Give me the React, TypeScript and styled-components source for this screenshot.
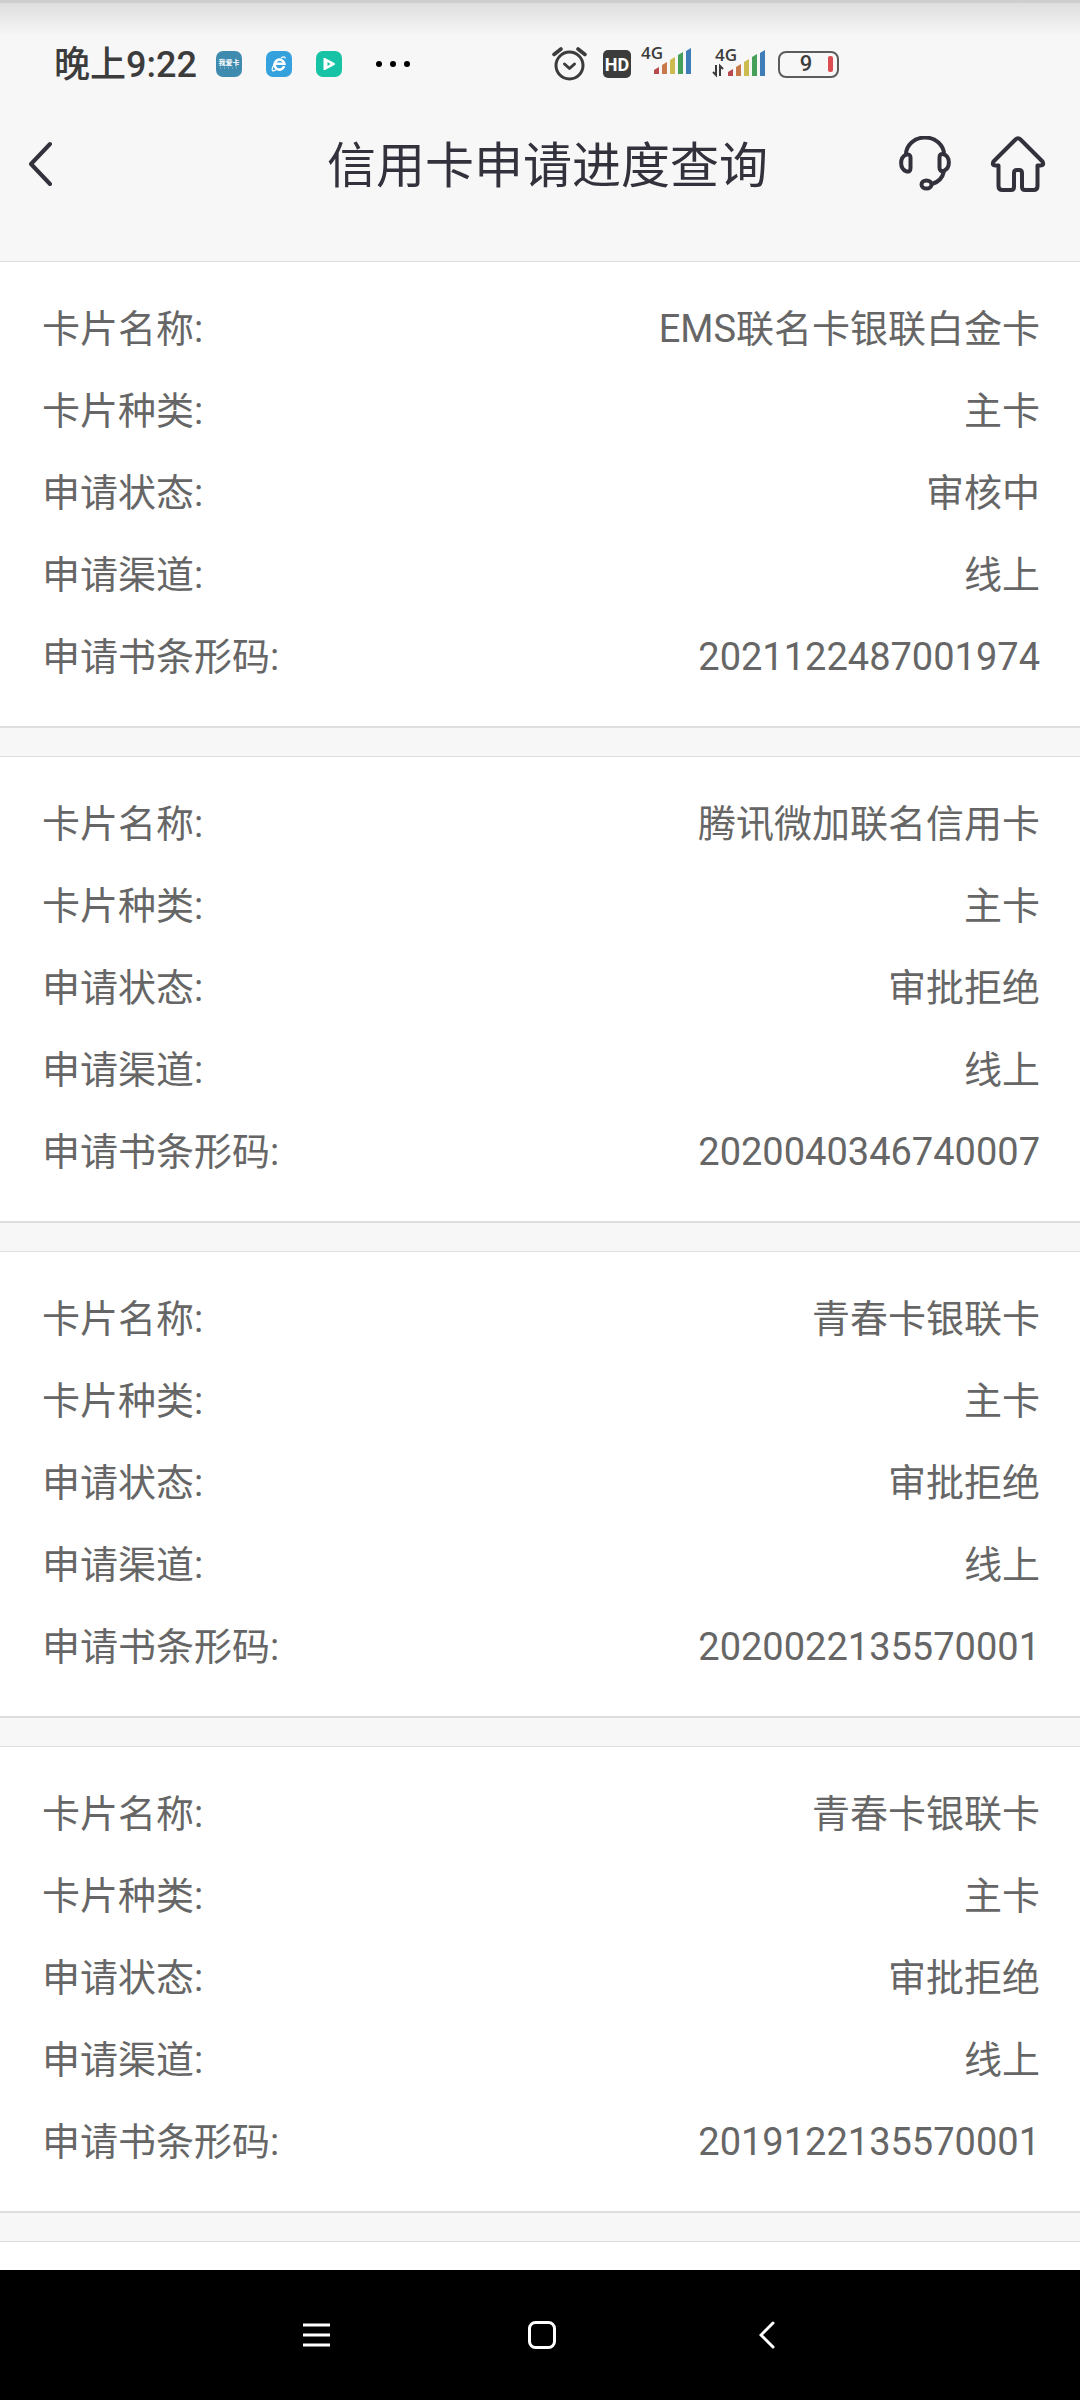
import React from "react";
import styled, { createGlobalStyle } from "styled-components";

const GlobalStyle = createGlobalStyle`
  *, *::before, *::after { box-sizing: border-box; }
  body {
    margin: 0;
    background: #f7f7f7;
    font-family: Roboto, "Noto Sans CJK SC", sans-serif;
  }
`;

const Screen = styled.div`
  display: flex;
  flex-direction: column;
  min-height: 100vh;
`;

const StatusBar = styled.div`
  display: flex;
  align-items: center;
  justify-content: space-between;
  height: 128px;
  padding: 0 241px 0 54px;
  color: #3c3c3c;
  background: linear-gradient(#cecece 0 3px, #dedede 3px, #f7f7f7 36px);
`;

const StatusGroup = styled.div<{ $gap: number }>`
  display: flex;
  align-items: center;
  gap: ${(p) => p.$gap}px;
`;

const Clock = styled.time`
  width: 138px;
  padding-top: 2px;
  font-size: 36px;
  line-height: 40px;
  font-weight: 500;
  white-space: nowrap;
`;

const HdBadge = styled.span`
  width: 28px;
  height: 28px;
  border-radius: 5px;
  background: #3c3c3c;
  color: #fff;
  font-size: 18px;
  line-height: 30px;
  font-weight: 700;
  text-align: center;
`;

const Battery = styled.div`
  display: flex;
  align-items: center;
  width: 61px;
  height: 27px;
  padding: 0 4px;
  border: 2px solid #5c5c5c;
  border-radius: 8px;
`;

const BatteryLevel = styled.span`
  flex: 1;
  font-size: 22px;
  line-height: 24px;
  font-weight: 500;
  text-align: center;
`;

const BatteryFill = styled.span`
  width: 5px;
  height: 16px;
  border-radius: 2px;
  background: #dc4c50;
`;

const Header = styled.header`
  display: flex;
  align-items: center;
  height: 133px;
  padding: 0 34px 62px 28px;
  color: #33313b;
`;

const Title = styled.h1`
  flex: 1;
  margin: 0;
  padding-top: 6px;
  font-size: 49px;
  line-height: 72px;
  font-weight: 400;
  text-align: center;
`;

const IconButton = styled.button<{ $width: number }>`
  display: flex;
  align-items: center;
  width: ${(p) => p.$width}px;
  height: 56px;
  padding: 0;
  border: 0;
  background: none;
  color: inherit;
`;

const Actions = styled.div`
  display: flex;
  gap: 37px;
`;

const List = styled.main`
  flex: 1;
  display: flex;
  flex-direction: column;
  gap: 28px;
`;

const Card = styled.dl`
  margin: 0;
  padding: 26px 40px 28px 42px;
  border-top: 1px solid #dedede;
  border-bottom: 2px solid #dedede;
  background: #fff;
`;

const NextCard = styled.div`
  flex: 1;
  border-top: 1px solid #dedede;
  background: #fff;
`;

const Row = styled.div`
  display: flex;
  justify-content: space-between;
  color: #666;
  font-size: 38px;
  line-height: 82px;
`;

const Label = styled.dt``;

const Value = styled.dd`
  margin: 0;
  text-align: right;
`;

const NavBar = styled.nav`
  display: flex;
  align-items: center;
  justify-content: center;
  gap: 168px;
  height: 130px;
  padding-left: 3px;
  background: #000;
  color: #fff;
`;

const NavButton = styled.button`
  display: flex;
  align-items: center;
  justify-content: center;
  width: 57px;
  height: 57px;
  padding: 0;
  border: 0;
  background: none;
  color: inherit;
`;

const CardForumIcon = () => (
  <svg width="26" height="26" viewBox="0 0 26 26" aria-hidden="true">
    <rect width="26" height="26" rx="7" fill="#3f8bb0" />
    <text x="13" y="14" fontSize="7" fontWeight="700" fill="#fff" textAnchor="middle">
      我爱卡
    </text>
    <path d="M4 17h18" stroke="#a9cde0" strokeDasharray="1 3" />
  </svg>
);

const BrowserIcon = () => (
  <svg width="26" height="26" viewBox="0 0 26 26" aria-hidden="true">
    <rect width="26" height="26" rx="7" fill="#36a2dd" />
    <path d="M18.2 15.2A5 5 0 1 1 18.4 12.8H9.5" fill="none" stroke="#fff" strokeWidth="2.6" />
    <path
      d="M8.2 13.5C5.6 17 5.4 20.2 7.8 19.8c1-.2 2-.8 3-1.5M15 7c2.6-1.6 4.4-1.5 4.3.5"
      fill="none"
      stroke="#fff"
      strokeWidth="1.2"
    />
  </svg>
);

const PlayIcon = () => (
  <svg width="26" height="26" viewBox="0 0 26 26" aria-hidden="true">
    <rect width="26" height="26" rx="7" fill="#16c3a4" />
    <path d="M8.500 7.800v10.400l9.500-5.200z" fill="#fff" stroke="#fff" strokeWidth="2" strokeLinejoin="round" />
    <path d="M11.500 11v4l3-2z" fill="#16c3a4" />
  </svg>
);

const MoreDots = () => (
  <svg width="44" height="6" viewBox="-10 0 44 6" fill="#000" aria-hidden="true">
    <circle cx="3" cy="3" r="3" />
    <circle cx="17" cy="3" r="3" />
    <circle cx="31" cy="3" r="3" />
  </svg>
);

const AlarmIcon = () => (
  <svg
    width="35"
    height="36"
    viewBox="0 0 35 36"
    fill="none"
    stroke="currentColor"
    strokeWidth="3"
    strokeLinecap="round"
    strokeLinejoin="round"
    aria-hidden="true"
  >
    <circle cx="17.500" cy="19.500" r="13.500" />
    <path d="M12.500 18l5 4.500 5-4.500" />
    <path d="M2 8.500l7-5.500M33 8.500l-7-5.500" strokeWidth="3.600" />
  </svg>
);

const BARS: [string, number][] = [
  ["#b8494e", 7],
  ["#c8794a", 12],
  ["#ccbc50", 17],
  ["#45a05a", 22],
  ["#3f7db8", 26],
];

const SignalBars = ({ x, bottom }: { x: number; bottom: number }) => (
  <>
    {BARS.map(([fill, h], i) => (
      <path key={fill} d={`M${x + i * 8} ${bottom}v${3 - h}l5-3v${h}z`} fill={fill} />
    ))}
  </>
);

const NetworkText = styled.text`
  font-family: "Open Sans", sans-serif;
  font-size: 17px;
  font-weight: 600;
  fill: #3c3c3c;
`;

const SignalIcon = () => (
  <svg width="51" height="48" viewBox="0 0 51 48" aria-hidden="true">
    <NetworkText x="0" y="19">4G</NetworkText>
    <SignalBars x={13} bottom={34} />
  </svg>
);

const DataSignalIcon = () => (
  <svg width="56" height="48" viewBox="0 0 56 48" aria-hidden="true">
    <NetworkText x="3" y="21">4G</NetworkText>
    <path d="M4 25v10l-3-3M8 36V26l3 3" fill="none" stroke="#3c3c3c" strokeWidth="2" />
    <SignalBars x={16} bottom={36} />
  </svg>
);

const HeaderBackIcon = () => (
  <svg
    width="24"
    height="46"
    viewBox="0 0 24 46"
    fill="none"
    stroke="currentColor"
    strokeWidth="4"
    strokeLinecap="round"
    strokeLinejoin="round"
    aria-hidden="true"
  >
    <path d="M22 3L3 23l19 20" />
  </svg>
);

const HeadsetIcon = () => (
  <svg
    width="56"
    height="56"
    viewBox="0 0 56 56"
    fill="none"
    stroke="currentColor"
    strokeWidth="4"
    strokeLinecap="round"
    strokeLinejoin="round"
    aria-hidden="true"
  >
    <path d="M9 18.500a19 17 0 0 1 38 0" />
    <path d="M13.500 21.500v10.500q0 4-4 3.500a8 9 0 0 1 0-17q4-.5 4 3z" />
    <path d="M42.500 21.500v10q0 4 4 3.500a8 9 0 0 0 0-17q-4-.5-4 3.500z" />
    <path d="M47 35q-2 10-12 13" />
    <ellipse cx="29.500" cy="48.500" rx="5" ry="4" />
  </svg>
);

const HomeIcon = () => (
  <svg
    width="56"
    height="58"
    viewBox="0 0 56 58"
    fill="none"
    stroke="currentColor"
    strokeWidth="4"
    strokeLinecap="round"
    strokeLinejoin="round"
    aria-hidden="true"
  >
    <path d="M25.500 4.500q2.500-2.500 5 0l22 22q2 4-2 4h-3V51q0 4-4 4H35q-3 0-3-3V38q0-3-3-3h-2q-3 0-3 3v14q0 3-3 3h-8.500q-4 0-4-4V30.500h-3q-4 0-2-4z" />
  </svg>
);

interface Application {
  name: string;
  status: string;
  barcode: string;
}

const APPLICATIONS: Application[] = [
  { name: "EMS联名卡银联白金卡", status: "审核中", barcode: "2021122487001974" },
  { name: "腾讯微加联名信用卡", status: "审批拒绝", barcode: "2020040346740007" },
  { name: "青春卡银联卡", status: "审批拒绝", barcode: "2020022135570001" },
  { name: "青春卡银联卡", status: "审批拒绝", barcode: "2019122135570001" },
];

const Field = ({ label, value }: { label: string; value: string }) => (
  <Row>
    <Label>{label}:</Label>
    <Value>{value}</Value>
  </Row>
);

export default function App() {
  return (
    <Screen lang="zh-CN">
      <GlobalStyle />
      <StatusBar>
        <StatusGroup $gap={24}>
          <Clock>晚上9:22</Clock>
          <CardForumIcon />
          <BrowserIcon />
          <PlayIcon />
          <MoreDots />
        </StatusGroup>
        <StatusGroup $gap={10}>
          <StatusGroup $gap={16}>
            <AlarmIcon />
            <HdBadge>HD</HdBadge>
          </StatusGroup>
          <StatusGroup $gap={20}>
            <SignalIcon />
            <DataSignalIcon />
          </StatusGroup>
          <Battery>
            <BatteryLevel>9</BatteryLevel>
            <BatteryFill />
          </Battery>
        </StatusGroup>
      </StatusBar>
      <Header>
        <IconButton $width={170} type="button" aria-label="返回">
          <HeaderBackIcon />
        </IconButton>
        <Title>信用卡申请进度查询</Title>
        <Actions>
          <IconButton $width={56} type="button" aria-label="客服">
            <HeadsetIcon />
          </IconButton>
          <IconButton $width={56} type="button" aria-label="首页">
            <HomeIcon />
          </IconButton>
        </Actions>
      </Header>
      <List>
        {APPLICATIONS.map((item) => (
          <Card key={item.barcode}>
            <Field label="卡片名称" value={item.name} />
            <Field label="卡片种类" value="主卡" />
            <Field label="申请状态" value={item.status} />
            <Field label="申请渠道" value="线上" />
            <Field label="申请书条形码" value={item.barcode} />
          </Card>
        ))}
        <NextCard />
      </List>
      <NavBar>
        <NavButton type="button" aria-label="最近任务">
          <svg width="27" height="24" viewBox="0 0 27 24" stroke="currentColor" strokeWidth="3" aria-hidden="true">
            <path d="M0 2h27M0 12h27M0 22h27" />
          </svg>
        </NavButton>
        <NavButton type="button" aria-label="主屏幕">
          <svg width="28" height="28" viewBox="0 0 28 28" fill="none" stroke="currentColor" strokeWidth="3" aria-hidden="true">
            <rect x="1.500" y="1.500" width="25" height="25" rx="6" />
          </svg>
        </NavButton>
        <NavButton type="button" aria-label="后退">
          <svg
            width="16"
            height="28"
            viewBox="0 0 16 28"
            fill="none"
            stroke="currentColor"
            strokeWidth="3"
            strokeLinecap="round"
            aria-hidden="true"
          >
            <path d="M14 2L2 14l12 12" />
          </svg>
        </NavButton>
      </NavBar>
    </Screen>
  );
}
